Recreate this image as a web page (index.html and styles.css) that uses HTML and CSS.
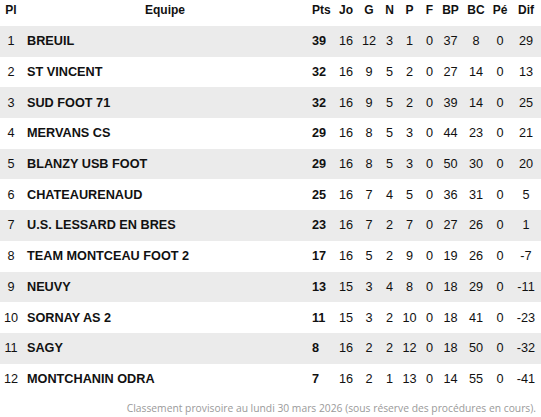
FILE: index.html
```html
<!DOCTYPE html>
<html lang="fr">
<head>
<meta charset="utf-8">
<title>Classement</title>
<link rel="stylesheet" href="styles.css">
</head>
<body>
<table class="standings">
  <colgroup>
    <col class="c-pl"><col class="c-team"><col class="c-pts"><col class="c-jo"><col class="c-g"><col class="c-n"><col class="c-p"><col class="c-f"><col class="c-bp"><col class="c-bc"><col class="c-pe"><col class="c-dif">
  </colgroup>
  <thead>
    <tr><th>Pl</th><th>Equipe</th><th class="pts">Pts</th><th>Jo</th><th>G</th><th>N</th><th>P</th><th>F</th><th>BP</th><th>BC</th><th>Pé</th><th>Dif</th></tr>
  </thead>
  <tbody>
    <tr><td>1</td><td class="team">BREUIL</td><td class="pts">39</td><td>16</td><td>12</td><td>3</td><td>1</td><td>0</td><td>37</td><td>8</td><td>0</td><td>29</td></tr>
    <tr><td>2</td><td class="team">ST VINCENT</td><td class="pts">32</td><td>16</td><td>9</td><td>5</td><td>2</td><td>0</td><td>27</td><td>14</td><td>0</td><td>13</td></tr>
    <tr><td>3</td><td class="team">SUD FOOT 71</td><td class="pts">32</td><td>16</td><td>9</td><td>5</td><td>2</td><td>0</td><td>39</td><td>14</td><td>0</td><td>25</td></tr>
    <tr><td>4</td><td class="team">MERVANS CS</td><td class="pts">29</td><td>16</td><td>8</td><td>5</td><td>3</td><td>0</td><td>44</td><td>23</td><td>0</td><td>21</td></tr>
    <tr><td>5</td><td class="team">BLANZY USB FOOT</td><td class="pts">29</td><td>16</td><td>8</td><td>5</td><td>3</td><td>0</td><td>50</td><td>30</td><td>0</td><td>20</td></tr>
    <tr><td>6</td><td class="team">CHATEAURENAUD</td><td class="pts">25</td><td>16</td><td>7</td><td>4</td><td>5</td><td>0</td><td>36</td><td>31</td><td>0</td><td>5</td></tr>
    <tr><td>7</td><td class="team">U.S. LESSARD EN BRES</td><td class="pts">23</td><td>16</td><td>7</td><td>2</td><td>7</td><td>0</td><td>27</td><td>26</td><td>0</td><td>1</td></tr>
    <tr><td>8</td><td class="team">TEAM MONTCEAU FOOT 2</td><td class="pts">17</td><td>16</td><td>5</td><td>2</td><td>9</td><td>0</td><td>19</td><td>26</td><td>0</td><td>-7</td></tr>
    <tr><td>9</td><td class="team">NEUVY</td><td class="pts">13</td><td>15</td><td>3</td><td>4</td><td>8</td><td>0</td><td>18</td><td>29</td><td>0</td><td>-11</td></tr>
    <tr><td>10</td><td class="team">SORNAY AS 2</td><td class="pts">11</td><td>15</td><td>3</td><td>2</td><td>10</td><td>0</td><td>18</td><td>41</td><td>0</td><td>-23</td></tr>
    <tr><td>11</td><td class="team">SAGY</td><td class="pts">8</td><td>16</td><td>2</td><td>2</td><td>12</td><td>0</td><td>18</td><td>50</td><td>0</td><td>-32</td></tr>
    <tr><td>12</td><td class="team">MONTCHANIN ODRA</td><td class="pts">7</td><td>16</td><td>2</td><td>1</td><td>13</td><td>0</td><td>14</td><td>55</td><td>0</td><td>-41</td></tr>
  </tbody>
</table>
<p class="note">Classement provisoire au lundi 30 mars 2026 (sous réserve des procédures en cours).</p>
</body>
</html>
```

FILE: styles.css
```css
html, body {
  margin: 0;
  padding: 0;
  background: #ffffff;
}

body {
  font-family: "Liberation Sans", Arial, sans-serif;
  color: #111111;
}

.standings {
  width: 541px;
  border-collapse: collapse;
  table-layout: fixed;
}

.c-pl { width: 22px; }
.c-team { width: 286px; }
.c-pts { width: 27px; }
.c-jo { width: 22px; }
.c-g { width: 24px; }
.c-n { width: 17px; }
.c-p { width: 23px; }
.c-f { width: 17px; }
.c-bp { width: 25px; }
.c-bc { width: 26px; }
.c-pe { width: 22px; }
.c-dif { width: 30px; }

.standings th {
  height: 26px;
  padding: 0;
  font-size: 12px;
  font-weight: bold;
  text-align: center;
  vertical-align: middle;
  box-sizing: border-box;
  padding-bottom: 6px;
}

.standings td {
  height: 30.7px;
  padding: 0;
  font-size: 12.7px;
  text-align: center;
  vertical-align: middle;
  white-space: nowrap;
  box-sizing: border-box;
}

.standings tbody tr:nth-child(odd) {
  background: #ebebeb;
}

.standings td.team {
  text-align: left;
  padding-left: 5px;
  font-weight: bold;
}

.standings .pts {
  text-align: left;
  padding-left: 4px;
  font-weight: bold;
}

.note {
  margin: 0;
  padding: 7px 5px 0 0;
  text-align: right;
  font-family: "Open Sans", sans-serif;
  font-size: 10.3px;
  color: #9a9a9a;
  white-space: nowrap;
}
```
